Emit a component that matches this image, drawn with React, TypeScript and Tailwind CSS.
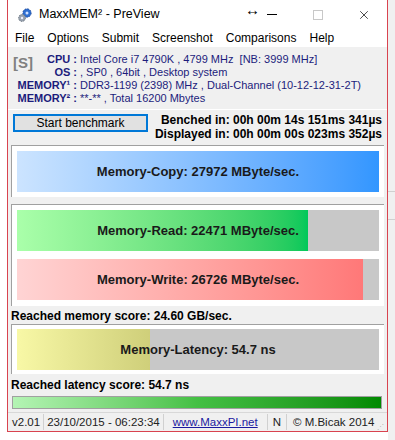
import { X } from "lucide-react";

const infoRows = [
  { label: "CPU :", value: "Intel Core i7 4790K , 4799 MHz\u00a0\u00a0[NB: 3999 MHz]" },
  { label: "OS :", value: ", SP0 , 64bit , Desktop system" },
  { label: "MEMORY\u00b9 :", value: "DDR3-1199 (2398) MHz , Dual-Channel (10-12-12-31-2T)" },
  { label: "MEMORY\u00b2 :", value: "**-** , Total 16200 Mbytes" },
];

const menu = ["File", "Options", "Submit", "Screenshot", "Comparisons", "Help"];

function Bar({ label, fill, pct }: { label: string; fill: string; pct: number }) {
  return (
    <div className="relative h-[41px] bg-[#c8c8c8]">
      <div className={`h-full ${fill}`} style={{ width: `${pct}%` }} />
      <div className="absolute inset-0 flex items-center justify-center text-[13px] font-bold text-[#1a1a1a]">
        {label}
      </div>
    </div>
  );
}

function GearIcon() {
  return (
    <svg width="16" height="16" viewBox="0 0 16 16">
      <circle cx="10" cy="6" r="4.2" fill="#2f6fd0" stroke="#1a3f8a" strokeWidth="0.8" strokeDasharray="1.6 1.2" />
      <circle cx="10" cy="6" r="1.5" fill="#cfe0ff" />
      <circle cx="5" cy="11" r="3.4" fill="#9aa4b0" stroke="#55606c" strokeWidth="0.8" strokeDasharray="1.4 1.1" />
      <circle cx="5" cy="11" r="1.2" fill="#eef" />
    </svg>
  );
}

export default function App() {
  return (
    <div
      className="flex h-[440px] w-[395px] overflow-hidden bg-white text-black"
      style={{ fontFamily: "'Liberation Sans', Arial, sans-serif" }}
    >
      <div className="w-[7px] bg-white" />
      <div className="flex h-[432px] w-[381px] flex-col border-x border-b border-[#d9434f] bg-[#f0f0f0]">
        {/* Title bar */}
        <div className="relative flex h-[31px] items-center bg-white pl-[9px]">
          <GearIcon />
          <span className="ml-[6px] text-[12.5px]">MaxxMEM² - PreView</span>
          <div className="ml-auto flex h-full">
            <span className="flex w-[46px] items-center justify-center">
              <span className="h-px w-[10px] bg-black" />
            </span>
            <span className="flex w-[46px] items-center justify-center">
              <span className="h-[10px] w-[10px] border border-[#c8c8c8]" />
            </span>
            <span className="flex w-[46px] items-center justify-center">
              <X size={14} strokeWidth={1.2} />
            </span>
          </div>
          <span className="absolute left-[237px] top-[1px] text-[15px] font-bold leading-[18px]">↔</span>
        </div>

        {/* Menu */}
        <div className="flex h-[19px] items-center gap-[13px] bg-white pl-[7px] text-[12px]">
          {menu.map((m) => (
            <span key={m}>{m}</span>
          ))}
        </div>

        {/* Info panel */}
        <div className="flex flex-col border-b border-white pb-[4px] pl-[5px] pt-[6px] text-[11px] leading-[13px] text-[#1c1c7c]">
          {infoRows.map((r, i) => (
            <div key={r.label} className="flex">
              <div className="flex w-[64px] shrink-0 justify-end">
                {i === 0 && (
                  <span className="mr-auto mt-[2px] h-0 text-[15px] font-bold leading-[16px] text-[#808080]">[S]</span>
                )}
                <span className="whitespace-nowrap font-bold">{r.label}</span>
              </div>
              <span className="ml-[3px] whitespace-nowrap">{r.value}</span>
            </div>
          ))}
        </div>

        {/* Benchmark row */}
        <div className="flex items-start justify-between pl-[5px] pr-[5px] pt-[3px]">
          <button className="mt-[1px] h-[18px] w-[135px] border-2 border-[#0078d7] bg-[#e1e1e1] text-[12px] leading-[14px]">
            Start benchmark
          </button>
          <div className="flex flex-col items-end whitespace-nowrap text-[12px] font-bold leading-[14px]">
            <span>Benched in: 00h 00m 14s 151ms 341µs</span>
            <span>Displayed in: 00h 00m 00s 023ms 352µs</span>
          </div>
        </div>

        {/* Copy */}
        <div className="ml-[3px] mr-[3px] mt-[4px] border-l border-t border-[#a0a0a0] bg-white p-[5px]">
          <Bar label="Memory-Copy: 27972 MByte/sec." fill="bg-gradient-to-r from-[#cce4ff] to-[#3296ff]" pct={100} />
        </div>

        {/* Read / Write */}
        <div className="ml-[3px] mr-[3px] mt-[7px] flex flex-col gap-[8px] border-l border-t border-[#a0a0a0] bg-white px-[5px] pb-[6px] pt-[5px]">
          <Bar label="Memory-Read: 22471 MByte/sec." fill="bg-gradient-to-r from-[#aaffaa] to-[#00c85a]" pct={80.3} />
          <Bar label="Memory-Write: 26726 MByte/sec." fill="bg-gradient-to-r from-[#ffd4d4] to-[#ff7878]" pct={95.5} />
        </div>

        <div className="ml-[3px] h-[18px] pt-[2px] text-[12px] font-bold leading-[17px]">Reached memory score: 24.60 GB/sec.</div>

        {/* Latency */}
        <div className="ml-[3px] mr-[3px] border-l border-t border-[#a0a0a0] bg-white px-[5px] pb-[4px] pt-[4px]">
          <Bar label="Memory-Latency: 54.7 ns" fill="bg-gradient-to-r from-[#f8f8a6] to-[#cfcf7a]" pct={36.7} />
        </div>

        <div className="ml-[3px] mt-[3px] h-[16px] text-[12px] font-bold leading-[16px]">Reached latency score: 54.7 ns</div>

        <div className="ml-[4px] mr-[5px] mt-[3px] h-[13px] border border-[#a0a0a0] bg-gradient-to-r from-[#b4f4b4] via-[#44c044] via-50% to-[#008a00]" />

        {/* Status bar */}
        <div className="mt-[3px] flex h-[20px] items-center whitespace-nowrap border-t border-[#d8d8d8] pl-[4px] pt-[1px] text-[11.5px] text-[#222]">
          <span className="pr-[3px]">v2.01</span>
          <span className="h-[16px] w-px bg-[#d0d0d0]" />
          <span className="px-[3px]">23/10/2015 - 06:23:34</span>
          <span className="h-[16px] w-px bg-[#d0d0d0]" />
          <span className="ml-[9px] text-[#1a1aa0] underline">www.MaxxPI.net</span>
          <span className="ml-[9px] h-[16px] w-px bg-[#d0d0d0]" />
          <span className="px-[5px]">N</span>
          <span className="h-[16px] w-px bg-[#d0d0d0]" />
          <span className="pl-[6px]">© M.Bicak 2014</span>
          <span className="ml-auto mr-[3px] mt-[8px] text-[7px] leading-none text-[#b0b0b0]">⋰</span>
        </div>
      </div>
      <div className="flex flex-1 flex-col bg-[#f0f0f0]">
        <div className="h-[192px] border-b border-[#d0d0d0]" />
        <div className="h-[28px] border-b border-[#d0d0d0]" />
      </div>
    </div>
  );
}
